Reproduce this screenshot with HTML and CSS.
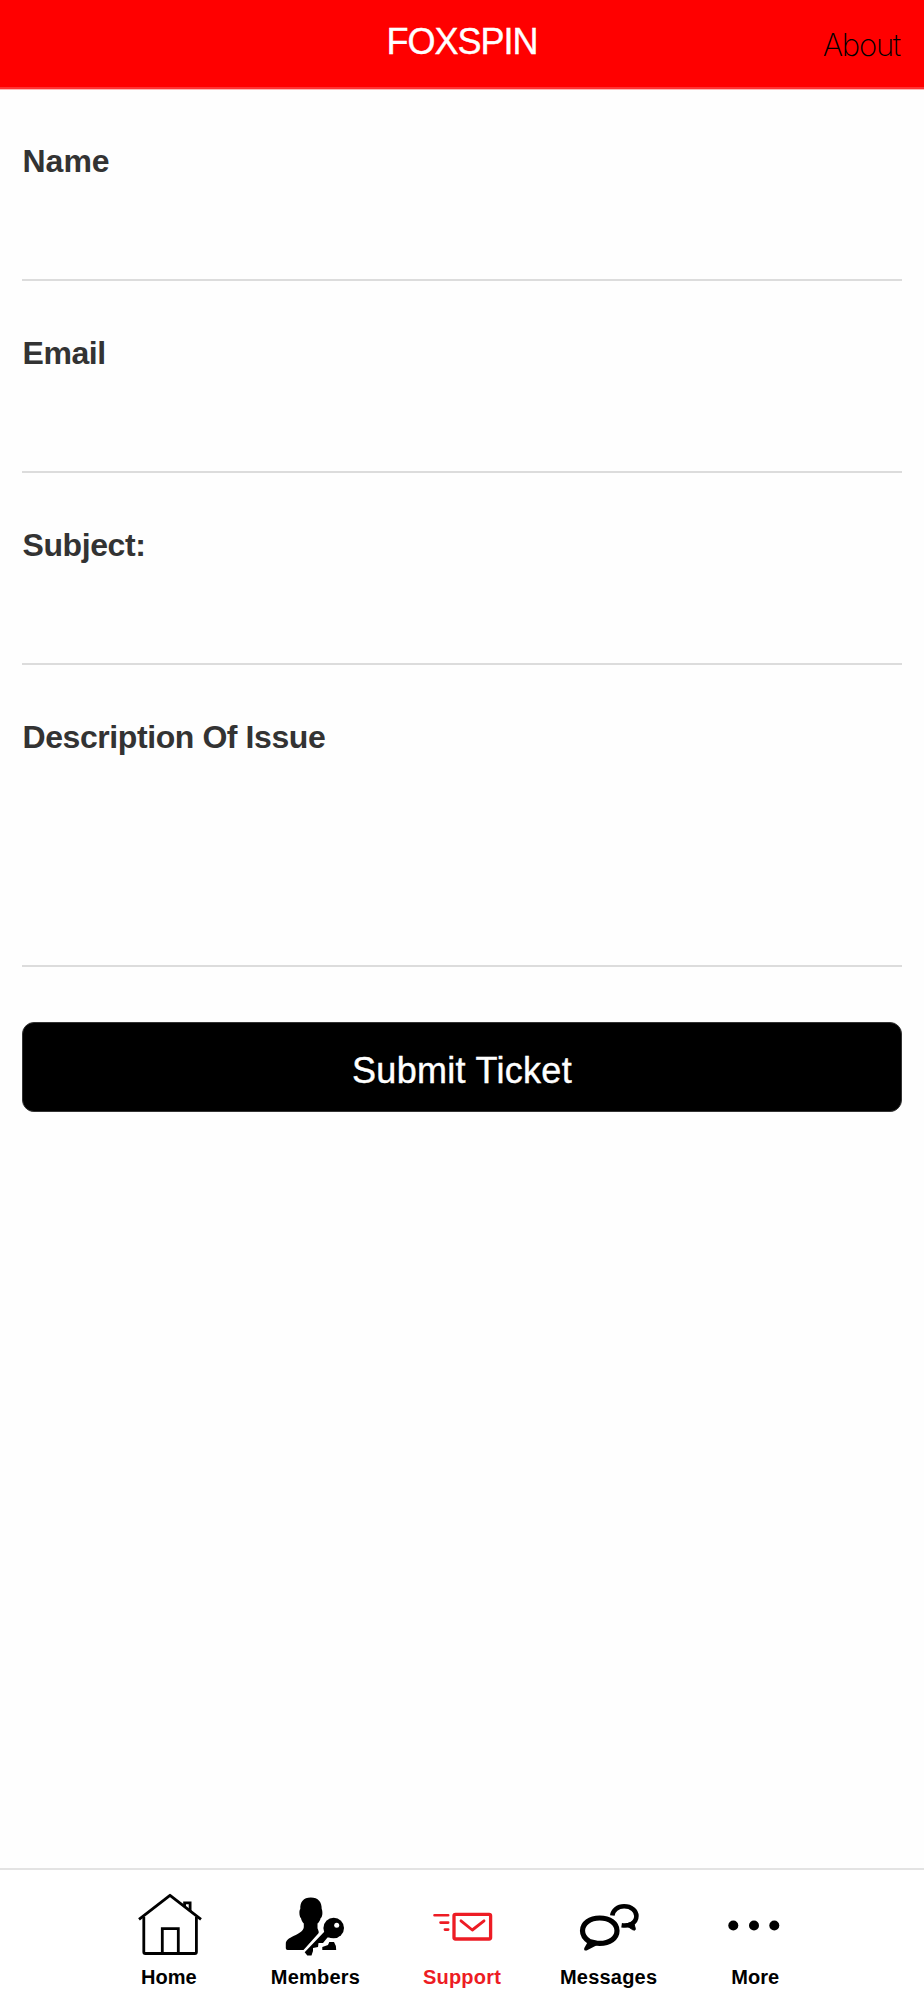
FILE: index.html
```html
<!DOCTYPE html>
<html lang="en">
<head>
<meta charset="utf-8">
<title>FOXSPIN</title>
<link rel="stylesheet" href="styles.css">
</head>
<body>
<div class="app">
  <header class="bar">
    <span></span>
    <h1 class="bar-title">FOXSPIN</h1>
    <a class="bar-link">About</a>
  </header>
  <form class="form">
    <div class="field"><label class="name" for="name">Name</label><input id="name" type="text"></div>
    <div class="field"><label for="email">Email</label><input id="email" type="text"></div>
    <div class="field"><label for="subject">Subject:</label><input id="subject" type="text"></div>
    <div class="field field-tall"><label for="issue">Description Of Issue</label><textarea id="issue"></textarea></div>
    <button class="submit" type="button">Submit Ticket</button>
  </form>
  <nav class="tabs">
    <a class="tab">
      <svg class="icon" viewBox="0 0 70 70" fill="none" stroke="#000" stroke-width="2.800" stroke-linejoin="round">
        <path d="M5 29.300 36 5.300 67 29.300"/>
        <path d="M9.800 27V62q0 1.500 1.500 1.500h49.600q1.500 0 1.500-1.500V27"/>
        <path d="M28.300 63.500V38.700h16V63.500M50.600 16v-3.200H56.100v8.500" stroke-linejoin="miter"/>
      </svg>
      <span>Home</span>
    </a>
    <a class="tab">
      <svg class="icon" viewBox="0 0 70 70">
        <path d="M30.800 7.500c-7.500 0-10.800 4.500-10.500 11.500-.8 1-.9 2-.9 4 0 2.500.8 4.600 1.600 5.200.4 2.200 1.600 4 2.800 5.300v3.700C23.500 41 19 43.500 14 45.800 8.500 48.800 5.800 50 5.800 54v4.200q0 1.800 1.800 1.800H23.500L38.300 43.500C39.500 42 38.200 40.500 37.500 38.200v-4.700c1.600-1.500 2.700-3.200 3.100-5.300 1.200-.6 1.800-2.700 1.800-5.200 0-2-.2-3-.7-4C41.800 12 38.300 7.500 30.800 7.500Z"/>
        <circle cx="53.700" cy="38" r="10.300"/>
        <path d="M44.500 41.500 24.700 62.300 27.300 65.500H31.500L33 61V58L38 57 38.500 53H43L47.500 47.500 52 47.500Z"/>
        <path d="M42.300 60v-3l5.700-2 1.300-3H54q2.200 3 2.200 8Z"/>
        <circle cx="56.700" cy="35.200" r="2.500" fill="#fff"/>
      </svg>
      <span class="wide">Members</span>
    </a>
    <a class="tab active">
      <svg class="icon" viewBox="0 0 70 70" fill="none" stroke="#ed1c24" stroke-width="3.300" stroke-linecap="round" stroke-linejoin="round">
        <rect x="27" y="24.300" width="36.600" height="24.700" rx="1.500"/>
        <path d="m34 30.800 11.300 9.200L57 30.800" stroke-width="2.900"/>
        <path d="M7.500 25.300h13.700M13.500 32.600h7.700M17.900 39.600h3.300" stroke-width="2.600"/>
      </svg>
      <span class="wide">Support</span>
    </a>
    <a class="tab">
      <svg class="icon" viewBox="0 0 70 70">
        <g transform="translate(-1.200 1)">
          <path d="M16.500 50.500C12 47.500 9.700 44 9.700 39.700c0-7.300 7.400-12.700 17.200-12.700 10.200 0 17.300 5.400 17.300 12.700S36.900 52.400 26.900 52.400q-2.500 0-4.800-.6Z" fill="none" stroke="#000" stroke-width="5.200" stroke-linejoin="round"/>
          <path d="m16 49-4.500 8q-.8 3 2.300 2.500L24.500 54Z"/>
          <path d="M39.500 24.500C40 19.500 44.800 15.300 51.300 15.300c7.400 0 12.300 4.500 12.300 9.700 0 3.500-1.900 6.500-5.300 8.300q-4 1.700-9.500.9" fill="none" stroke="#000" stroke-width="4.600"/>
          <path d="m52 33.500 8 5.300q3 1.200 2.500-1.300l-2-7Z" stroke="#000" stroke-linejoin="round"/>
        </g>
      </svg>
      <span class="wide">Messages</span>
    </a>
    <a class="tab">
      <svg class="icon" viewBox="0 0 70 70"><circle cx="13.300" cy="35.500" r="5"/><circle cx="34" cy="35.500" r="5"/><circle cx="54.300" cy="35.500" r="5"/></svg>
      <span>More</span>
    </a>
  </nav>
</div>
</body>
</html>
```

FILE: styles.css
```css
* { box-sizing: border-box; }
body { margin: 0; background: #fefefe; font-family: "Liberation Sans", Arial, sans-serif; }
.app { display: flex; flex-direction: column; width: 924px; height: 2000px; }
.bar {
  display: grid; grid-template-columns: 1fr auto 1fr; align-items: start;
  height: 89px; background: #f00; border-bottom: 2px solid #ff3333; box-shadow: 0 1px #ffb5b5;
}
.bar-title { margin: 0; padding-top: 20px; font-size: 36px; line-height: 43px; font-weight: 400; color: #fff; letter-spacing: -1px; -webkit-text-stroke: 0.4px #fff; }
.bar-link { justify-self: end; padding: 25px 24px 0 0; font-family: Inter, sans-serif; font-weight: 200; font-size: 31px; line-height: 40px; letter-spacing: -1.2px; color: #000; }
.form { flex: 1; display: flex; flex-direction: column; padding: 0 22px; }
.field { display: flex; flex-direction: column; height: 192px; padding-top: 54px; border-bottom: 2px solid #dcdcdc; }
.field-tall { height: 302px; }
label { padding-left: 0.500px; font-size: 32px; line-height: 36px; font-weight: 700; color: #333; letter-spacing: -0.42px; }
.name { letter-spacing: 0; }
input, textarea { flex: 1; width: 100%; min-height: 0; border: 0; padding: 0; outline: 0; resize: none; background: transparent; font: 32px "Liberation Sans", Arial, sans-serif; }
.submit { margin-top: 55px; height: 90px; padding: 7px 0 0; border: 1px solid #333; border-radius: 12px; background: #000; color: #fff; font: 36px "Liberation Sans", Arial, sans-serif; letter-spacing: 0.3px; -webkit-text-stroke: 0.4px #fff; }
.tabs { display: flex; justify-content: center; height: 132px; border-top: 2px solid #e3e3e3; background: #fff; }
.tab { display: flex; flex-direction: column; align-items: center; width: 146.600px; padding-top: 20px; font-size: 20px; line-height: 24px; font-weight: 700; color: #000; }
.icon { width: 70px; height: 70px; margin-bottom: 5px; }
.wide { letter-spacing: 0.2px; }
.active { color: #ed1c24; }
```
